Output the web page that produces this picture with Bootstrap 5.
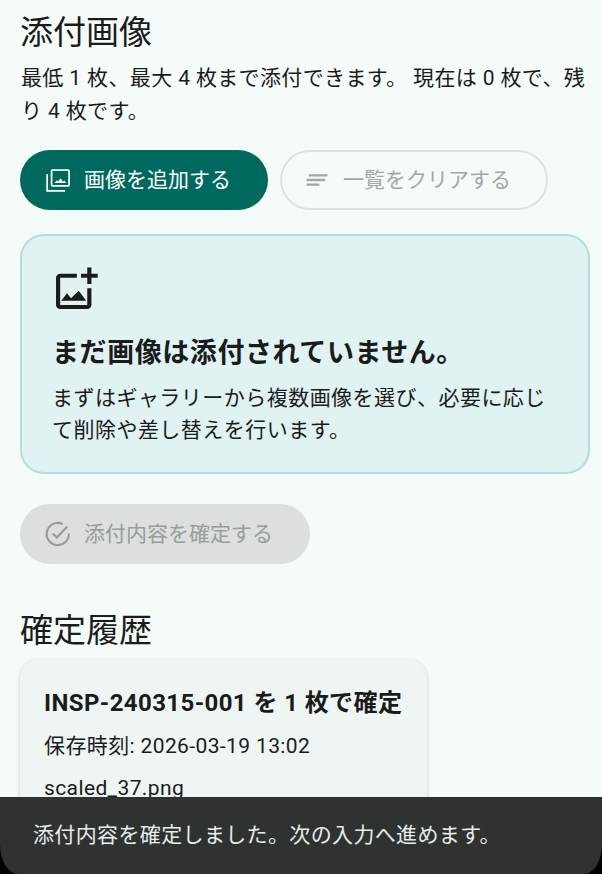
<!DOCTYPE html>
<html lang="ja"><head><meta charset="utf-8">
<link href="https://cdn.jsdelivr.net/npm/bootstrap@5.3.0/dist/css/bootstrap.min.css" rel="stylesheet">
<style>
html,body{height:874px;overflow:hidden}
body{background:#f5fbf9;color:#191c1b;font-family:Roboto,"Noto Sans CJK JP",sans-serif;position:relative}
.pg{padding:11px 12px 0 20px;height:874px;overflow:hidden}
.ttl{font-size:33px;line-height:44px;font-weight:400;margin:0}
.desc{font-size:21px;line-height:33px;margin:7px 0 0 1px;letter-spacing:.37px}
.acts{margin-top:22px;gap:12px}
.pill{height:60px;border-radius:30px;font-size:21px;display:flex;align-items:center;padding:0 0 0 24px;gap:12px;border:0}
.pill svg{flex:none}
.pill span{padding-top:2px}
.add{width:248px;background:#00695f;color:#fff}
.clr{width:268px;background:transparent;border:2px solid #dde2e0;color:#a3a8a6;padding-left:21px}
.emp{margin-top:24px;width:570px;height:240px;background:#e0f2f1;border:2px solid #b2dfdb;border-radius:24px;padding:26px 31px 26px 30px}
.emp svg{margin-left:-1px}
.emp h2{font-size:27px;line-height:36px;font-weight:700;margin:23px 0 11px;letter-spacing:.57px;white-space:nowrap}
.emp p{font-size:21px;line-height:32px;margin:0;letter-spacing:.47px}
.conf{margin-top:30px;width:290px;background:#dbdfdd;color:#979c9a}
.hist{font-size:33px;line-height:44px;margin:45px 0 0;font-weight:400}
.rec{margin-top:7px;width:407px;height:200px;background:#eff5f3;border-radius:18px;box-shadow:0 1px 4px rgba(0,0,0,.18);padding:25px 24px}
.rec h3{font-size:24px;line-height:36px;font-weight:700;margin:0 0 8px;white-space:nowrap;letter-spacing:.4px}
.rec p{font-size:21px;line-height:34px;margin:0 0 8px;letter-spacing:.38px}
.snack{position:absolute;left:0;right:0;top:797px;height:77px;background:#2e3332;color:#e8ecea;font-size:21px;padding:20px 33px;line-height:36px;border-radius:0 0 18px 18px / 0 0 30px 30px;letter-spacing:.36px}
.base{position:absolute;left:0;right:0;top:840px;height:34px;background:#000}
</style></head><body>
<div class="pg">
<h1 class="ttl">添付画像</h1>
<p class="desc">最低 1 枚、最大 4 枚まで添付できます。 現在は 0 枚で、残り 4 枚です。</p>
<div class="d-flex acts">
<button class="pill add"><svg width="28" height="28" viewBox="0 0 24 24" fill="none" stroke="currentColor" stroke-width="1.500"><rect x="6.500" y="3.500" width="15" height="13.500" rx=".8"/><path d="M2.700 7v14.300H18"/><path d="M9 14.500l2.200-2.300 1 1 2-2.600 2.100 2.800 1.200-1 1.500 2.100z" fill="currentColor" stroke="none"/></svg><span>画像を追加する</span></button>
<button class="pill clr" disabled><svg width="28" height="28" viewBox="0 0 24 24" fill="currentColor"><path d="M3 17h11v-2H3zm0-4h16v-2H3zm2-6v2h16V7z"/></svg><span>一覧をクリアする</span></button>
</div>
<div class="emp">
<svg class="d-block" width="50" height="50" viewBox="0 0 24 24" fill="currentColor"><path d="M18 20H5V7h8V5H5a2 2 0 0 0-2 2v13a2 2 0 0 0 2 2h13a2 2 0 0 0 2-2v-8h-2zM10.200 16.800l-1.900-2.400L5.500 18h12l-3.600-4.800zM20 5V2h-2v3h-3v2h3v3h2V7h3V5z" transform="translate(-.6 .6)"/></svg>
<h2>まだ画像は添付されていません。</h2>
<p>まずはギャラリーから複数画像を選び、必要に応じて削除や差し替えを行います。</p>
</div>
<button class="pill conf" disabled><svg width="28" height="28" viewBox="0 0 24 24" fill="none" stroke="currentColor" stroke-width="1.800"><path d="M21.300 11.500A9.500 9.500 0 1 1 16 3.500"/><path d="M7.500 11.500l3.500 3.500 9-9.500"/></svg><span>添付内容を確定する</span></button>
<h2 class="hist">確定履歴</h2>
<div class="rec">
<h3>INSP-240315-001 を 1 枚で確定</h3>
<p>保存時刻: 2026-03-19 13:02</p>
<p>scaled_37.png</p>
</div>
</div>
<div class="base"></div>
<div class="snack">添付内容を確定しました。次の入力へ進めます。</div>
</body></html>
